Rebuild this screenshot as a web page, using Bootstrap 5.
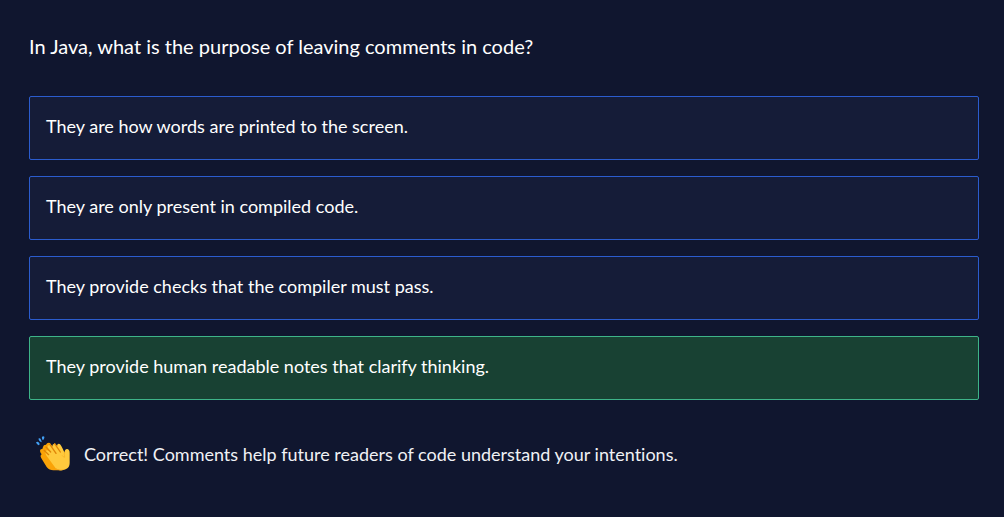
<!DOCTYPE html>
<html lang="en">
<head>
<meta charset="utf-8">
<meta name="viewport" content="width=device-width, initial-scale=1">
<title>Java quiz</title>
<link href="https://cdn.jsdelivr.net/npm/bootstrap@5.3.0/dist/css/bootstrap.min.css" rel="stylesheet">
<style>
body { background: #10162f; color: #fff; font-family: Lato, "Liberation Sans", sans-serif; font-variant-ligatures: none; }
.quiz { padding: 31px 25px 32px 29px; }
.question { font-size: 20px; line-height: 30px; font-weight: 400; margin-bottom: 35px; }
.answer { background: #151c38; border: 1px solid #2b5cce; border-radius: 2px; color: #fff; font-size: 18px; line-height: 30px; padding: 14px 16px 18px; }
.answer:hover { background: #1b2446; }
.answer.correct { background: #184133; border-color: #3eb489; }
.feedback { padding-left: 7px; margin-top: 36px; gap: 14px; font-size: 18px; line-height: 30px; color: #f0f1f5; }
</style>
</head>
<body>
<main class="quiz">
  <h1 class="question">In Java, what is the purpose of leaving comments in code?</h1>
  <div class="d-grid gap-3">
    <button type="button" class="answer text-start">They are how words are printed to the screen.</button>
    <button type="button" class="answer text-start">They are only present in compiled code.</button>
    <button type="button" class="answer text-start">They provide checks that the compiler must pass.</button>
    <button type="button" class="answer correct text-start">They provide human readable notes that clarify thinking.</button>
  </div>
  <div class="feedback d-flex align-items-center" role="status">
    <svg class="flex-shrink-0" width="34" height="35" viewBox="24 18 102 105" aria-hidden="true">
      <path fill="#42a0f5" d="M24 37q5-4 9 1t-1 8q-5-1-8-9zM31 26q5-3 8 3 3 7 1 8-7-3-9-11zM42 20q4-3 7 0 1 6-4 11-4-3-3-11z"/>
      <path fill="#faa307" d="M36 63q0-7 7-6l2-6q1-7 9-7 3-7 12-5l42 60-18 22H76q-12 0-20-10L40 85q-5-8 1-12-4-4-5-10z"/>
      <path fill="#ffca3d" d="M53 65q2-6 9-3l4 2-7-11q-2-8 7-8 3 0 7 6-1-10 6-10 4 0 8 7 1-9 8-6 4 2 15 27-1-11 7-12 8 1 8 12v30q0 14-12 19-18 8-30-3L56 78q-5-7-3-13z"/>
      <path d="M54 51 68 66M66 44l18 26M80 41l17 25M48 61l14 13" fill="none" stroke="#df8508" stroke-width="4" stroke-linecap="round"/>
      <path d="M110 65q-2 8 0 17-5-1-8-6" fill="none" stroke="#f5ad23" stroke-width="2"/>
      <path d="M80 113q16 11 33 3-8 6-22 5-8-1-11-8z" fill="#f4a61d"/>
    </svg>
    <span>Correct! Comments help future readers of code understand your intentions.</span>
  </div>
</main>
<script src="https://cdn.jsdelivr.net/npm/bootstrap@5.3.0/dist/js/bootstrap.bundle.min.js"></script>
</body>
</html>
